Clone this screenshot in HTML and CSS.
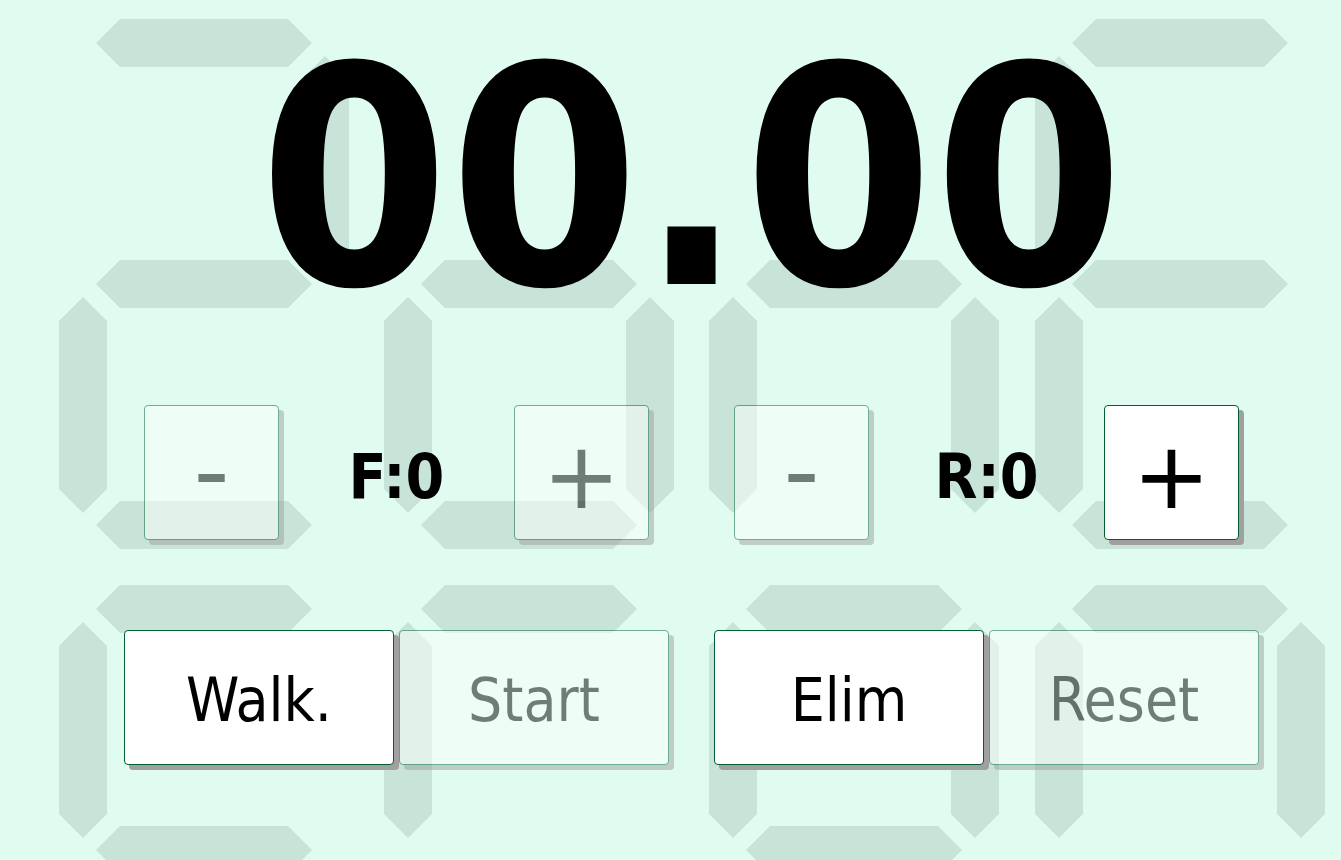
FILE: index.html
```html
<!DOCTYPE html>
<html lang="en">
<head>
<meta charset="utf-8">
<title>Timer</title>
<link rel="stylesheet" href="styles.css">
</head>
<body>
<div class="backdrop" aria-hidden="true">
  <svg class="segments" width="1341" height="860" viewBox="0 0 1341 860">
    <defs>
      <polygon id="h" points="0,0 24,-24 192,-24 216,0 192,24 24,24"/>
      <polygon id="v" points="0,0 24,24 24,192 0,216 -24,192 -24,24"/>
    </defs>
    <g class="seg">
      <!-- row 1: Z -->
      <use href="#h" x="96" y="43"/>
      <use href="#v" x="325" y="56"/>
      <use href="#h" x="96" y="284"/>
      <use href="#v" x="83" y="297"/>
      <use href="#h" x="96" y="525"/>
      <!-- o -->
      <use href="#h" x="421" y="284"/>
      <use href="#v" x="408" y="297"/>
      <use href="#v" x="650" y="297"/>
      <use href="#h" x="421" y="525"/>
      <!-- n -->
      <use href="#h" x="746" y="284"/>
      <use href="#v" x="733" y="297"/>
      <use href="#v" x="975" y="297"/>
      <!-- E -->
      <use href="#h" x="1072" y="43"/>
      <use href="#v" x="1059" y="56"/>
      <use href="#h" x="1072" y="284"/>
      <use href="#v" x="1059" y="297"/>
      <use href="#h" x="1072" y="525"/>
      <!-- row 2 -->
      <use href="#h" x="96" y="609"/>
      <use href="#v" x="83" y="622"/>
      <use href="#h" x="96" y="850"/>
      <use href="#h" x="421" y="609"/>
      <use href="#v" x="408" y="622"/>
      <use href="#h" x="746" y="609"/>
      <use href="#v" x="733" y="622"/>
      <use href="#v" x="975" y="622"/>
      <use href="#h" x="746" y="850"/>
      <use href="#h" x="1072" y="609"/>
      <use href="#v" x="1059" y="622"/>
      <use href="#v" x="1301" y="622"/>
    </g>
  </svg>
</div>
<main class="app">
  <div class="clock">00.00</div>
  <div class="panels">
    <section class="panel">
      <div class="counter-row">
        <button class="btn sq is-off"><span class="sym minus">-</span></button>
        <span class="count">F:0</span>
        <button class="btn sq is-off"><span class="sym plus">+</span></button>
      </div>
      <div class="action-row">
        <button class="btn wide">Walk.</button>
        <button class="btn wide is-off">Start</button>
      </div>
    </section>
    <section class="panel">
      <div class="counter-row">
        <button class="btn sq is-off"><span class="sym minus">-</span></button>
        <span class="count">R:0</span>
        <button class="btn sq"><span class="sym plus">+</span></button>
      </div>
      <div class="action-row">
        <button class="btn wide">Elim</button>
        <button class="btn wide is-off">Reset</button>
      </div>
    </section>
  </div>
</main>
</body>
</html>
```
FILE: styles.css
```css
html, body {
  margin: 0;
  padding: 0;
}

body {
  background: #e0fcf0;
  width: 1341px;
  height: 860px;
  overflow: hidden;
  position: relative;
  font-family: "DejaVu Sans Condensed", "DejaVu Sans", sans-serif;
  font-stretch: condensed;
  color: #000;
}

.backdrop {
  position: absolute;
  left: 0;
  top: 0;
  z-index: 0;
}

.segments {
  display: block;
}

.seg {
  fill: #c8e4d8;
}

.app {
  position: relative;
  z-index: 1;
  margin-left: 42px;
  width: 1299px;
}

.clock {
  padding-top: 28px;
  font-size: 304px;
  line-height: 303px;
  font-weight: bold;
  text-align: center;
  white-space: nowrap;
}

.panels {
  margin-top: 74px;
  display: grid;
  grid-template-columns: 590px 590px;
  justify-content: center;
}

.panel {
  display: flex;
  flex-direction: column;
  align-items: center;
  gap: 90px;
}

.counter-row {
  width: 505px;
  display: flex;
  align-items: center;
  justify-content: space-between;
}

.count {
  font-size: 62px;
  font-weight: bold;
  line-height: 1;
  padding-top: 8px;
}

.action-row {
  display: flex;
  gap: 5px;
}

.btn {
  box-sizing: border-box;
  height: 135px;
  margin: 0;
  padding: 0;
  background: #fff;
  border: 1px solid #006030;
  border-radius: 4px;
  box-shadow: 5px 5px 0 #a0a0a0;
  color: #000;
  font-family: inherit;
  font-stretch: condensed;
  display: flex;
  align-items: center;
  justify-content: center;
  cursor: pointer;
}

.btn.is-off {
  opacity: 0.5;
}

.sq {
  width: 135px;
}

.wide {
  width: 270px;
  font-size: 60px;
  line-height: 1;
  padding-top: 4px;
}

.sym {
  font-family: "DejaVu Sans", sans-serif;
  font-stretch: normal;
  line-height: 1;
}

.plus {
  font-size: 93px;
  padding-top: 8px;
}

.minus {
  font-size: 100px;
  padding-bottom: 4px;
}
```
